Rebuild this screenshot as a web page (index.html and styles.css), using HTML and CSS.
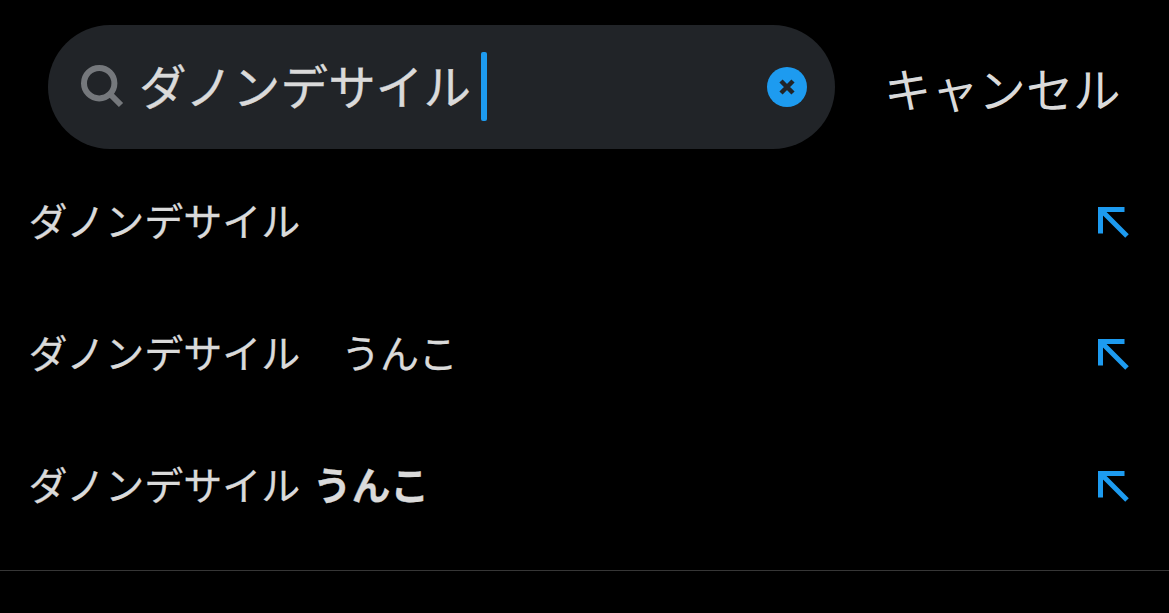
FILE: index.html
```html
<!DOCTYPE html>
<html lang="ja">
<head>
    <meta charset="UTF-8">
    <meta name="viewport" content="width=device-width, initial-scale=1.0">
    <title>検索</title>
    <link rel="stylesheet" href="styles.css">
</head>
<body>

    <!-- 検索バー -->
    <header class="search-header">
        <div class="search-box">
            <svg class="search-icon" viewBox="0 0 44 44">
                <circle cx="19.2" cy="18.2" r="15.2"></circle>
                <path d="M30 29 L41 40"></path>
            </svg>
            <span class="search-text">ダノンデサイル</span>
            <span class="caret"></span>
            <button class="clear-button" aria-label="消去">
                <svg viewBox="0 0 40 40">
                    <path d="M14 14 L26 26 M26 14 L14 26"></path>
                </svg>
            </button>
        </div>
        <a class="cancel" href="#">キャンセル</a>
    </header>

    <!-- 検索候補 -->
    <ul class="suggestions">
        <li class="suggestion">
            <span class="label">ダノンデサイル</span>
            <svg class="arrow" viewBox="0 0 32 32"><path d="M2.5 26.5 V2.5 H26.5 M2.5 2.5 L29 29"></path></svg>
        </li>
        <li class="suggestion">
            <span class="label">ダノンデサイル<span class="word">うんこ</span></span>
            <svg class="arrow" viewBox="0 0 32 32"><path d="M2.5 26.5 V2.5 H26.5 M2.5 2.5 L29 29"></path></svg>
        </li>
        <li class="suggestion">
            <span class="label">ダノンデサイル<b class="word-bold">うんこ</b></span>
            <svg class="arrow" viewBox="0 0 32 32"><path d="M2.5 26.5 V2.5 H26.5 M2.5 2.5 L29 29"></path></svg>
        </li>
    </ul>

</body>
</html>
```
FILE: styles.css
```css
* {
    box-sizing: border-box;
}
body {
    margin: 0;
    background-color: #000;
    color: #dadada;
    font-family: "Noto Sans CJK JP", sans-serif;
    overflow: hidden;
}
.search-header {
    display: flex;
    align-items: center;
    padding: 25px 0 0 48px;
}
.search-box {
    display: flex;
    flex-shrink: 0;
    align-items: center;
    width: 787px;
    height: 124px;
    padding: 0 28px 0 32px;
    border-radius: 62px;
    background-color: #212428;
}
.search-icon {
    width: 44px;
    height: 44px;
    fill: none;
    stroke: #75787c;
    stroke-width: 6;
}
.search-text {
    margin-left: 15px;
    padding-bottom: 5px;
    font-size: 47.5px;
    line-height: 60px;
    letter-spacing: 0.15px;
    white-space: nowrap;
    -webkit-text-stroke: 0.4px #dadada;
}
.caret {
    width: 6px;
    height: 69px;
    margin-bottom: 1px;
    margin-left: 10px;
    border-radius: 2px;
    background-color: #1d9bf0;
}
.clear-button {
    width: 40px;
    height: 40px;
    margin-left: auto;
    padding: 0;
    border: none;
    border-radius: 50%;
    background-color: #1d9bf0;
}
.clear-button svg {
    display: block;
    fill: none;
    stroke: #212428;
    stroke-width: 4.5;
}
.cancel {
    margin-left: 49px;
    padding-top: 1px;
    color: #dadada;
    font-size: 47.3px;
    line-height: 60px;
    text-decoration: none;
    white-space: nowrap;
}
.suggestions {
    height: 422px;
    margin: 0;
    padding: 8px 39px 0 28.5px;
    border-bottom: 1px solid #363636;
    list-style: none;
}
.suggestion {
    display: flex;
    align-items: center;
    justify-content: space-between;
    height: 132px;
}
.label {
    padding-bottom: 8px;
    font-size: 39px;
    line-height: 50px;
    white-space: nowrap;
    -webkit-text-stroke: 0.3px #dadada;
}
.word {
    margin-left: 41px;
    letter-spacing: -0.3px;
}
.word-bold {
    margin-left: 12.5px;
    letter-spacing: -0.3px;
}
.arrow {
    width: 32px;
    height: 32px;
    fill: none;
    stroke: #1d9bf0;
    stroke-width: 5;
}
```
